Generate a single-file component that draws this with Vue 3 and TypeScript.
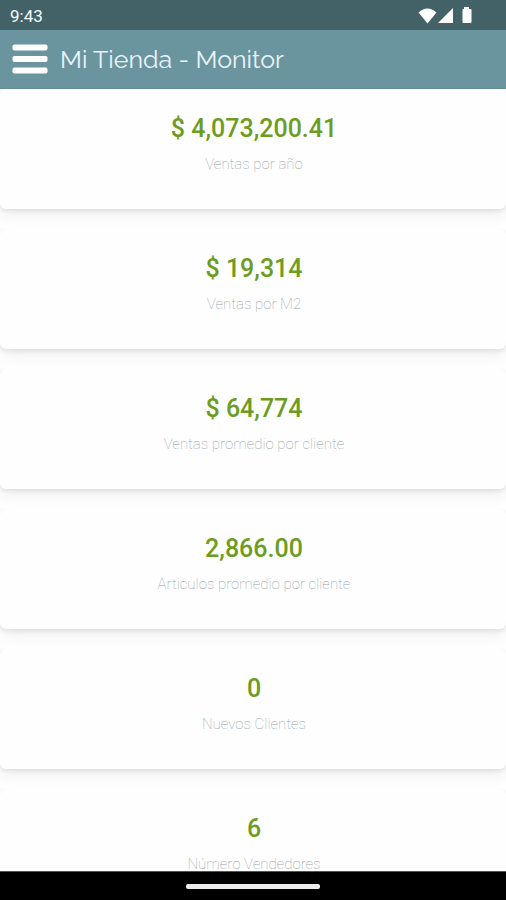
<script setup lang="ts">
import { ref } from 'vue'

interface Metric {
  value: string
  label: string
}

const metrics = ref<Metric[]>([
  { value: '$ 4,073,200.41', label: 'Ventas por año' },
  { value: '$ 19,314', label: 'Ventas por M2' },
  { value: '$ 64,774', label: 'Ventas promedio por cliente' },
  { value: '2,866.00', label: 'Articulos promedio por cliente' },
  { value: '0', label: 'Nuevos Clientes' },
  { value: '6', label: 'Número Vendedores' },
])
</script>

<template>
  <div class="screen">
    <div class="status">
      <span>9:43</span>
      <svg class="status-icons" viewBox="0 0 56 18" aria-hidden="true">
        <path d="M0.500 5.500Q9.500-2.500 18.500 5.500L9.500 16.500Z" />
        <path d="M20 16L35 1V16Z" />
        <path d="M46 0h5v2h1.500q1 0 1 1v12q0 1-1 1h-7q-1 0-1-1V3q0-1 1-1H46Z" />
      </svg>
    </div>
    <header class="bar">
      <button class="menu" type="button" aria-label="Menú">
        <svg viewBox="0 0 36 30" aria-hidden="true">
          <rect x="0.500" y="0.500" width="35" height="6" rx="2" />
          <rect x="0.500" y="12" width="35" height="6" rx="2" />
          <rect x="0.500" y="23.500" width="35" height="6" rx="2" />
        </svg>
      </button>
      <h1>Mi Tienda - Monitor</h1>
    </header>
    <main class="list">
      <section v-for="m in metrics" :key="m.label" class="card">
        <p class="value">{{ m.value }}</p>
        <p class="label">{{ m.label }}</p>
      </section>
    </main>
    <footer class="nav"><div class="handle"></div></footer>
  </div>
</template>

<style>
body {
  margin: 0;
}
</style>

<style scoped>
.screen {
  display: flex;
  flex-direction: column;
  height: 100vh;
  overflow: hidden;
  background: #fefefe;
  font-family: Roboto, sans-serif;
}
.status {
  flex: none;
  display: flex;
  align-items: center;
  justify-content: space-between;
  box-sizing: border-box;
  height: 30px;
  padding: 2px 32px 0 10px;
  background: #426268;
  color: #f4fafa;
  font-size: 17px;
}
.status-icons {
  width: 56px;
  height: 18px;
  fill: #fff;
}
.bar {
  flex: none;
  display: flex;
  align-items: center;
  gap: 12px;
  box-sizing: border-box;
  height: 59px;
  padding: 0 12px;
  background: #6b959e;
  border-bottom: 1px solid #64898f;
}
.menu {
  padding: 0;
  border: 0;
  background: none;
}
.menu svg {
  display: block;
  width: 36px;
  height: 30px;
  fill: #fff;
}
h1 {
  margin: 0;
  color: #e9f3fa;
  font: 400 25px/30px Raleway, Lato, sans-serif;
}
.list {
  flex: 1;
  min-height: 0;
  overflow: hidden;
  display: flex;
  flex-direction: column;
  gap: 20px;
}
.card {
  flex: none;
  box-sizing: border-box;
  height: 120px;
  padding: 25px 0 0 2px;
  border-radius: 6px;
  background: #fefefe;
  box-shadow: 0 4px 16px rgba(0, 0, 0, 0.08), 0 2px 4px rgba(0, 0, 0, 0.08);
  clip-path: inset(0 0 -20px 0);
  text-align: center;
}
.value {
  margin: 0;
  color: #6c9c20;
  font-size: 25px;
  font-weight: 500;
  line-height: 30px;
}
.label {
  margin: 11px 0 0;
  color: #94a3a8;
  font-size: 15px;
  font-weight: 100;
  line-height: 18px;
}
.nav {
  flex: none;
  display: flex;
  justify-content: center;
  align-items: center;
  box-sizing: border-box;
  height: 29px;
  border-top: 1px solid #555;
  background: #000;
}
.handle {
  width: 134px;
  height: 5px;
  border-radius: 2px;
  background: #ececec;
}
</style>
